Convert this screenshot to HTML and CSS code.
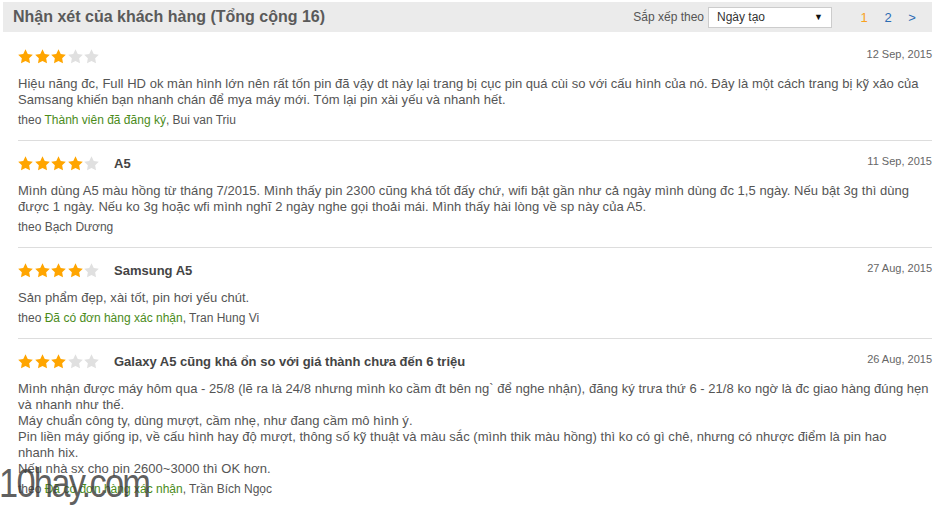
FILE: index.html
```html
<!DOCTYPE html>
<html lang="vi">
  <head>
    <meta charset="UTF-8" />
    <meta name="viewport" content="width=device-width, initial-scale=1.0" />
    <title>Nhận xét của khách hàng</title>
    <link rel="stylesheet" href="styles.css">
  </head>
  <body>
    <div class="reviews">
      <div class="reviews-head">
        <h2>Nhận xét của khách hàng (Tổng cộng 16)</h2>
        <div class="sort">
          <span>Sắp xếp theo</span>
          <div class="select">Ngày tạo<span class="arrow">&#9660;</span></div>
        </div>
        <div class="pages">
          <span class="current">1</span>
          <a href="#">2</a>
          <a href="#">&gt;</a>
        </div>
      </div>

      <div class="review" data-stars="3">
        <div class="review-top">
          <div class="stars"></div>
          <span class="date">12 Sep, 2015</span>
        </div>
        <p class="text">Hiệu năng đc, Full HD ok màn hình lớn nên rất tốn pin đã vậy dt này lại trang bị cục pin quá cùi so với cấu hình của nó. Đây là một cách trang bị kỹ xảo của<br>Samsang khiến bạn nhanh chán để mya máy mới. Tóm lại pin xài yếu và nhanh hết.</p>
        <p class="by">theo <a href="#">Thành viên đã đăng ký</a>, Bui van Triu</p>
      </div>

      <div class="review" data-stars="4">
        <div class="review-top">
          <div class="stars"></div>
          <h3>A5</h3>
          <span class="date">11 Sep, 2015</span>
        </div>
        <p class="text">Mình dùng A5 màu hồng từ tháng 7/2015. Mình thấy pin 2300 cũng khá tốt đấy chứ, wifi bật gần như cả ngày mình dùng đc 1,5 ngày. Nếu bật 3g thì dùng<br>được 1 ngày. Nếu ko 3g hoặc wfi mình nghĩ 2 ngày nghe gọi thoải mái. Mình thấy hài lòng về sp này của A5.</p>
        <p class="by">theo Bạch Dương</p>
      </div>

      <div class="review" data-stars="4">
        <div class="review-top">
          <div class="stars"></div>
          <h3>Samsung A5</h3>
          <span class="date">27 Aug, 2015</span>
        </div>
        <p class="text">Sản phẩm đẹp, xài tốt, pin hơi yếu chút.</p>
        <p class="by">theo <a href="#">Đã có đơn hàng xác nhận</a>, Tran Hung Vi</p>
      </div>

      <div class="review" data-stars="3">
        <div class="review-top">
          <div class="stars"></div>
          <h3>Galaxy A5 cũng khá ổn so với giá thành chưa đến 6 triệu</h3>
          <span class="date">26 Aug, 2015</span>
        </div>
        <p class="text">Mình nhận được máy hôm qua - 25/8 (lẽ ra là 24/8 nhưng mình ko cầm đt bên ng` để nghe nhận), đăng ký trưa thứ 6 - 21/8 ko ngờ là đc giao hàng đúng hẹn<br>và nhanh như thế.<br>Máy chuẩn công ty, dùng mượt, cầm nhẹ, như đang cầm mô hình ý.<br>Pin liền máy giống ip, về cấu hình hay độ mượt, thông số kỹ thuật và màu sắc (mình thik màu hồng) thì ko có gì chê, nhưng có nhược điểm là pin hao<br>nhanh hix.<br>Nếu nhà sx cho pin 2600~3000 thì OK hơn.</p>
        <p class="by">theo <a href="#">Đã có đơn hàng xác nhận</a>, Trần Bích Ngọc</p>
      </div>
    </div>

    <div class="watermark">10hay.com</div>

    <script>
      // Vẽ sao cho từng nhận xét
      const starPath = "M8 0.3l2.4 4.9 5.4 .8-3.9 3.8.9 5.4L8 12.7l-4.8 2.5.9-5.4L.2 6l5.4-.8z";
      document.querySelectorAll(".review").forEach((review) => {
        const count = Number(review.dataset.stars);
        const box = review.querySelector(".stars");
        for (let i = 0; i < 5; i++) {
          const cls = i < count ? "on" : "off";
          box.innerHTML += `<svg class="star ${cls}" viewBox="0 0 16 16"><path d="${starPath}"/></svg>`;
        }
      });
    </script>
  </body>
</html>
```

FILE: styles.css
```css
body {
  font-family: "Liberation Sans", Arial, sans-serif;
  margin: 0;
  padding: 2px 12px 0 3px;
  background-color: #fff;
  color: #555;
  font-size: 13px;
}
.reviews-head {
  background-color: #ebebeb;
  height: 30px;
  display: flex;
  align-items: center;
  padding: 0 10px;
  margin-bottom: 2px;
}
.reviews-head h2 {
  margin: 0;
  font-size: 16px;
  color: #5a5a5a;
  flex: 1;
}
.sort {
  display: flex;
  align-items: center;
  font-size: 12px;
  color: #555;
}
.sort span {
  margin-right: 4px;
}
.select {
  width: 114px;
  height: 19px;
  line-height: 19px;
  border: 1px solid #ccc;
  background-color: #fff;
  padding-left: 8px;
  color: #333;
  position: relative;
}
.select .arrow {
  position: absolute;
  right: 4px;
  top: 0;
  font-size: 9px;
  color: #111;
}
.pages {
  display: flex;
  font-size: 13px;
  margin-left: 20px;
  margin-right: -2px;
}
.pages span,
.pages a {
  width: 24px;
  text-align: center;
  text-decoration: none;
  color: #2b6cb3;
}
.pages .current {
  color: #f8a21f;
}
.review {
  margin-left: 15px;
  padding: 14px 0 12px;
  border-bottom: 1px solid #ddd;
}
.review-top {
  display: flex;
  align-items: flex-start;
  height: 18px;
}
.stars {
  display: flex;
  gap: 1.5px;
  margin-top: 1px;
}
.star {
  width: 15px;
  height: 15px;
}
.star.on {
  fill: #ffa500;
}
.star.off {
  fill: #e0e0e0;
}
.review-top h3 {
  margin: 1px 0 0 15px;
  font-size: 13px;
  color: #444;
}
.date {
  margin-left: auto;
  font-size: 11px;
  line-height: 12px;
  color: #666;
}
.text {
  margin: 10px 0 0;
  line-height: 16px;
  letter-spacing: 0.04px;
}
.by {
  margin: 4px 0 0;
  font-size: 12px;
  line-height: 16px;
}
.by a {
  color: #4b8b1a;
  text-decoration: none;
}
.watermark {
  position: absolute;
  left: -1px;
  top: 461px;
  font-size: 40px;
  letter-spacing: -2px;
  transform: scaleX(0.86);
  transform-origin: left top;
  color: rgba(60, 60, 60, 0.82);
}
```
